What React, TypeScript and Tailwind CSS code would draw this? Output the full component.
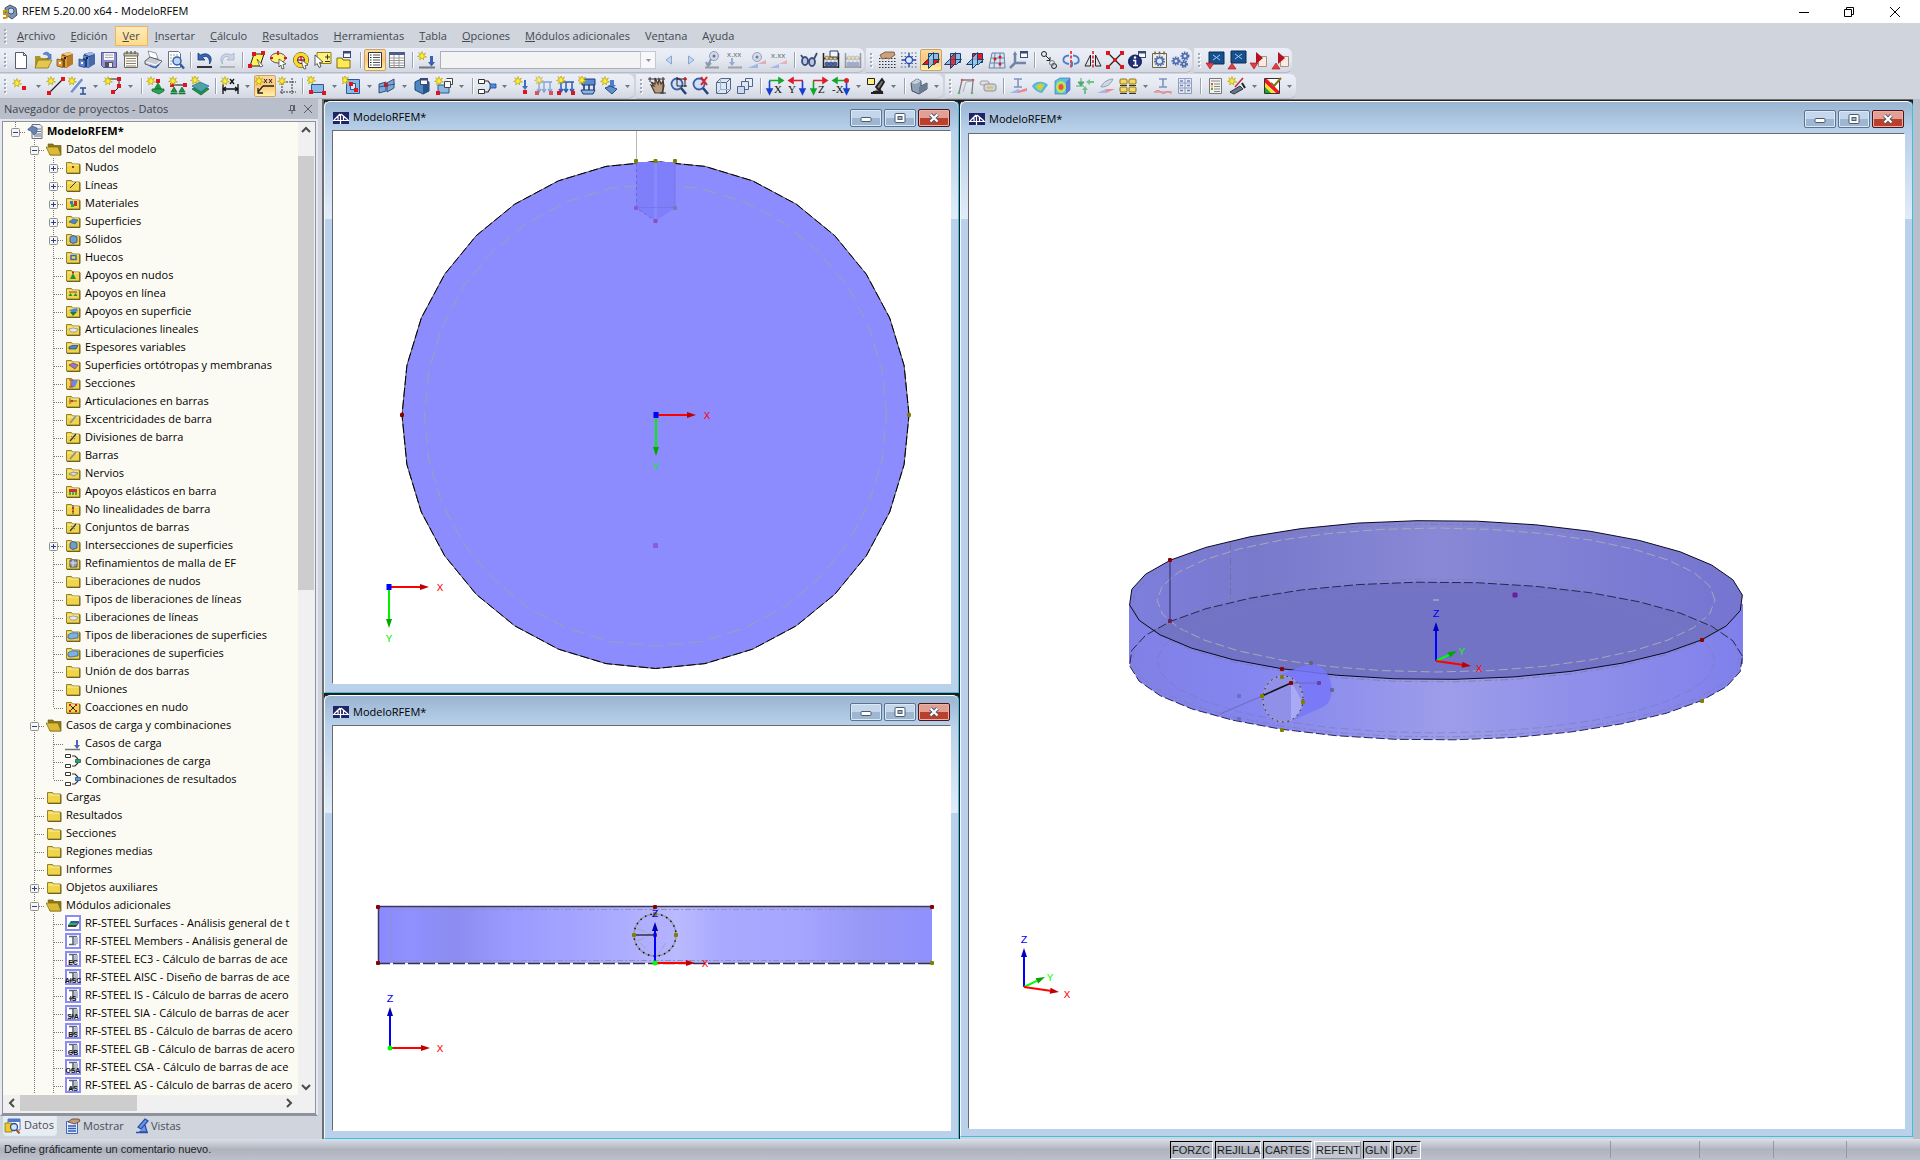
import type { ReactNode } from 'react';
import { clsx } from 'clsx';

// ---------- icon primitives (20x20 grid) ----------

const Star = ({ x = 5, y = 5 }: { x?: number; y?: number }) => (
  <path
    transform={`translate(${x} ${y})`}
    d="M0-4.500L1-1.500 3.500-3 1.800-.4 4.500 1 1.500 1.200 1.500 4 0 2-2.500 4-1.600 1-4.500 .5-1.800-.7-3.200-3.300-1-1.700Z"
    fill="#ffed2e"
    stroke="#b7a51a"
    strokeWidth=".7"
  />
);

const Node = ({ x, y, c = '#e0141e' }: { x: number; y: number; c?: string }) => (
  <rect x={x - 2} y={y - 2} width="4" height="4" fill={c} />
);

const Cabinet = ({ c, d, l }: { c: string; d: string; l: string }) => (
  <>
    <path d="M7 4l7-2 4 2v10l-7 4-7-2z" fill={d} />
    <path d="M7 4l7-2 4 2-6 2z" fill={l} />
    <path d="M6 5l6 2v10l-2 1V9L6 8z" fill={c} />
    <path d="M2 9l6 1.500v7L2 16z" fill={c} stroke={d} strokeWidth=".8" />
    <path d="M12 7l6-3v10l-6 4z" fill={c} fillOpacity=".6" />
    <rect x="4" y="12" width="2" height="2" fill="#fff" />
    <rect x="9" y="7" width="2" height="2" fill="#222" />
  </>
);

const LoadArrow = ({ c = '#3c5fb4' }: { c?: string }) => (
  <>
    <path d="M2 17.500h16" stroke="#777" strokeWidth="2" />
    <path d="M13 6v6h-2l3.500 4.500L18 12h-2V6z" fill={c} />
  </>
);

const Planes = ({ front, side, top }: { front?: boolean; side?: boolean; top?: boolean }) => (
  <>
    <path d="M7.500 3.500h10v9h-10z" fill={top ? '#f01822' : '#8dbde6'} stroke="#17406e" />
    <path d="M1.500 14.500l5-5h12l-5 5z" fill={front ? '#e01a24' : '#8dbde6'} stroke="#17406e" />
    <path d="M7.500 7.500l5-5v11l-5 5z" fill={side ? '#e01a24' : '#9ccaf0'} stroke="#17406e" fillOpacity=".8" />
  </>
);

const AxisView = ({ h, v, label, flip }: { h: string; v: string; label: string; flip?: boolean }) => (
  <>
    <g transform={flip ? 'translate(20 0) scale(-1 1)' : undefined}>
      <path d="M4 4.500h10M14 2l4 2.500L14 7z" stroke={h} strokeWidth="1.600" fill={h} />
      <path d="M4.500 5v9M2 13l2.500 5L7 13z" stroke={v} strokeWidth="1.600" fill={v} />
    </g>
    <text x={flip ? 1 : 9} y="17" fontSize="11" fontFamily="Liberation Serif, serif" fill="#111">
      {label}
    </text>
  </>
);

const Beads = ({ faded }: { faded?: boolean }) => (
  <g opacity={faded ? 0.4 : 1}>
    <path d="M2.500 3v15M17.500 3v15M2 8.500h16M2 17h16" stroke="#222" strokeWidth="1.500" />
    {[6, 10, 14].map((x) => (
      <g key={x}>
        <circle cx={x} cy="8" r="2" fill="#d9c98a" stroke="#6b5c20" strokeWidth=".6" />
        <circle cx={x} cy="14" r="2" fill="#4664b8" stroke="#1d2c60" strokeWidth=".6" />
      </g>
    ))}
    {!faded && <path d="M9 1h8v6H9z" fill="#f4f4fb" stroke="#34405e" />}
  </g>
);

const MiniWindow = ({ x = 11, y = 1 }: { x?: number; y?: number }) => (
  <>
    <rect x={x + 0.5} y={y + 0.5} width="7" height="6" fill="#f8f9ff" stroke="#3c4a70" />
    <path d={`M${x} ${y + 1.5}h8`} stroke="#3c4a70" strokeWidth="2" />
  </>
);

const Gear = ({ x, y, r, c = '#4d6cb0' }: { x: number; y: number; r: number; c?: string }) => (
  <>
    <circle cx={x} cy={y} r={r} fill="none" stroke={c} strokeWidth="2" strokeDasharray="1.500 1" />
    <circle cx={x} cy={y} r={r - 1.2} fill="#dfe7f7" stroke={c} strokeWidth="1.600" />
  </>
);

const Support = ({ x, y }: { x: number; y: number }) => (
  <>
    <path d={`M${x} ${y}l3 5h-6z`} fill="#1d9444" stroke="#0b5c25" strokeWidth=".6" />
    <path d={`M${x - 3.5} ${y + 6.5}h7`} stroke="#0b7a30" strokeWidth="1.500" />
  </>
);

const icons: Record<string, ReactNode> = {
  newDoc: <path d="M4.500 2.500h8l3 3v13h-11zM12.500 2.500v3h3" fill="#fff" stroke="#555c6e" />,
  open: (
    <>
      <path d="M2 6h5l1 2h8v10H2z" fill="#b09526" />
      <path d="M10 4c3-3 6-2 7 1l1-1v5h-4l1.500-2c-1-3-3-2-5.500-3z" fill="#5b8ad0" stroke="#315a9a" strokeWidth=".6" />
      <path d="M5 10h14l-4 8H2z" fill="#e2c850" stroke="#8c741a" strokeWidth=".8" />
    </>
  ),
  cabOrange: <Cabinet c="#e09a35" d="#7a4d12" l="#f3c684" />,
  cabBlue: <Cabinet c="#5d86cf" d="#23407e" l="#9db9ea" />,
  save: (
    <>
      <path d="M2.500 2.500h15v15h-13l-2-2z" fill="#8f8fd0" stroke="#55559a" />
      <path d="M5 3h10v7H5z" fill="#f5f5fa" />
      <path d="M6 5h8M6 7.500h8" stroke="#aaa" />
      <path d="M6 12h8v5H6z" fill="#555" />
      <path d="M10 13h3v4h-3z" fill="#eee" />
    </>
  ),
  clip: (
    <>
      <path d="M3.500 3.500h13v14h-13z" fill="#fdfdf5" stroke="#6b6455" />
      <path d="M3 3h14v3H3z" fill="#c9c1ae" stroke="#6b6455" />
      <path d="M6 1v3M10 1v3M14 1v3" stroke="#6b6455" strokeWidth="1.500" />
      <path d="M5 8.500h10M5 11h10M5 13.500h10M5 16h10" stroke="#87806c" />
    </>
  ),
  print: (
    <>
      <path d="M5 1l8 2 2 6-8-1z" fill="#fff" stroke="#7a8090" strokeWidth=".8" />
      <path d="M2 11l5-4 12 4-6 7L2 14z" fill="#c9ccd6" stroke="#5b606e" />
      <path d="M3 12l10 3 5-4" stroke="#fff" fill="none" />
      <path d="M7 16l5 1.500 4-3" stroke="#3e63b0" fill="none" strokeWidth="1.500" />
    </>
  ),
  preview: (
    <>
      <path d="M3.500 1.500h10l2 2v14h-12z" fill="#fff" stroke="#6d7280" />
      <path d="M5 5h8M5 8h4M5 11h3M5 14h3" stroke="#9aa0ae" strokeDasharray="2 1" />
      <circle cx="12" cy="11" r="4" fill="#bdd4f3" stroke="#2f5da8" strokeWidth="1.500" />
      <path d="M15 14l4 4.500" stroke="#2f5da8" strokeWidth="2.500" />
    </>
  ),
  undo: (
    <>
      <path d="M3 3v7h7L7.500 7.500C11 5 15 7 14.500 14 19 8 14 1 5.500 5z" fill="#3566b8" stroke="#1c3a75" strokeWidth=".8" />
      <path d="M2 17h15" stroke="#333" strokeWidth="2" />
    </>
  ),
  redo: (
    <g opacity=".6">
      <path d="M17 3v7h-7l2.500-2.500C9 5 5 7 5.500 14 1 8 6 1 14.500 5z" fill="#b9c9e2" stroke="#7d8ba5" strokeWidth=".8" />
      <path d="M3 17h15" stroke="#999" strokeWidth="2" />
    </g>
  ),
  selPoly: (
    <>
      <path d="M7 4h10l-4 12H3z" fill="#fff35a" stroke="#222" />
      <Node x={7} y={4} />
      <Node x={16} y={3} />
      <Node x={3} y={16} />
      <path d="M10 9l6 7-3 1z" fill="#fff" stroke="#222" strokeWidth=".6" />
    </>
  ),
  selEllipse: (
    <>
      <ellipse cx="9" cy="8" rx="7.500" ry="5" fill="#fff07a" stroke="#555" />
      <path d="M9 1v4M1 8h3M15 8h3" stroke="#e0141e" strokeWidth="1.800" />
      <path d="M10 9l7 5-3 .5 1 4-2 .5-1-4-2 2z" fill="#fff" stroke="#333" strokeWidth=".7" />
    </>
  ),
  selRing: (
    <>
      <circle cx="10" cy="10" r="7.500" fill="#fff" stroke="#7a6a00" />
      <circle cx="10" cy="10" r="5.500" fill="none" stroke="#ffd82a" strokeWidth="3.500" />
      <circle cx="10" cy="10" r="3.500" fill="none" stroke="#222" />
      <path d="M10 6v5M7 10h6" stroke="#e0141e" strokeWidth="1.500" />
      <path d="M11 10l6 5-3 .5 1 3-2 .5-2-5z" fill="#fff" stroke="#333" strokeWidth=".7" />
    </>
  ),
  selPlus: (
    <>
      <path d="M4 2.500h14v11H4z" fill="#fff27a" stroke="#8a7f20" />
      <path d="M12 7h5M14.500 4.500v5M12 11.500h5" stroke="#333" />
      <path d="M2 5l8 7-3.500.5 1.500 4-2 1-2-4-2 2z" fill="#fff" stroke="#333" strokeWidth=".8" />
    </>
  ),
  selWin: (
    <>
      <path d="M2 8h5l1 2h7v8H2z" fill="#ffea52" stroke="#7a6d12" />
      <MiniWindow x={8} y={1} />
    </>
  ),
  listOn: (
    <>
      <path d="M3.500 2.500h13v15h-13z" fill="#fff" stroke="#333" />
      <path d="M8 5h7M8 7.500h7M8 10h7M8 12.500h7M8 15h7" stroke="#555" />
      <path d="M5 5h1.500M5 7.500h1.500M5 10h1.500M5 12.500h1.500M5 15h1.500" stroke="#222" />
    </>
  ),
  table: (
    <>
      <path d="M2.500 3.500h15v14h-15z" fill="#fff" stroke="#777" />
      <path d="M2 2h16v3H2z" fill="#4c5f8a" />
      <path d="M3 8h14M3 10.500h14M3 13h14M3 15.500h14M7 5v12M12 5v12" stroke="#999" />
    </>
  ),
  loadCase: (
    <>
      <LoadArrow />
      <Star x={5} y={6} />
    </>
  ),
  prev: <path d="M12.500 6v8L7 10z" fill="#c8d8f0" stroke="#8aa4d4" />,
  next: <path d="M7.500 6v8l5.500-4z" fill="#c8d8f0" stroke="#8aa4d4" />,
  resView: (
    <g opacity=".65">
      <path d="M2 17.500h14" stroke="#777" strokeWidth="2" />
      <circle cx="11" cy="6" r="4.500" fill="#c5d2e8" stroke="#5f7398" />
      <circle cx="11" cy="6" r="1.500" fill="#334" />
      <path d="M8 9l-3 6M3 12l2 4 3-3" stroke="#5f7398" strokeWidth="2" fill="none" />
    </g>
  ),
  valLoad: (
    <g opacity=".7">
      <text x="2" y="7" fontSize="8" fontFamily="Liberation Sans" fill="#333">x.xx</text>
      <path d="M3 17.500h14" stroke="#8a8a8a" strokeWidth="2" />
      <path d="M6 8h2v4h2l-3 4-3-4h2z" fill="#7b93c4" />
    </g>
  ),
  eyeRes: (
    <g opacity=".6">
      <circle cx="10" cy="7" r="4.500" fill="#c5d2e8" stroke="#5f7398" />
      <circle cx="10" cy="7" r="1.500" fill="#334" />
      <path d="M10 14l9-4v4z" fill="#e08a96" />
      <path d="M1 18l9-4h1v4z" fill="#7f9ae0" />
    </g>
  ),
  valRes: (
    <g opacity=".7">
      <text x="2" y="8" fontSize="8" fontFamily="Liberation Sans" fill="#333">x.xx</text>
      <path d="M10 14l8-4v4z" fill="#ef9aa4" />
      <path d="M1 18l9-4v4z" fill="#8ea6ee" />
    </g>
  ),
  glasses: (
    <>
      <ellipse cx="6" cy="11" rx="3" ry="4" fill="#b9c7e2" stroke="#3a4c7a" strokeWidth="1.800" />
      <ellipse cx="13" cy="12" rx="3" ry="4" fill="#b9c7e2" stroke="#3a4c7a" strokeWidth="1.800" />
      <path d="M4 8L2 5M15 9l3-6M9 11h1" stroke="#3a4c7a" strokeWidth="1.800" />
    </>
  ),
  beads: <Beads />,
  beadsOff: <Beads faded />,
  gridHand: (
    <>
      <path d="M2 8.500h17M2 11.500h17M2 14.500h17M2 17.500h17" stroke="#333" strokeDasharray="1.500 1.500" />
      <path d="M3 5l5-3h9l1 3-6 4-3-1-4 1z" fill="#c9a27d" stroke="#6d4c30" strokeWidth=".8" />
    </>
  ),
  snap: (
    <>
      <path d="M2 3h17M2 6.500h17M2 10h17M2 13.500h17M2 17h17" stroke="#666" strokeDasharray="1.500 2" />
      <path d="M10 3v14M3 10h14" stroke="#1c4bb8" strokeWidth="1.300" />
      <circle cx="10" cy="10" r="3.500" fill="#dfe8fb" stroke="#1c4bb8" strokeWidth="1.300" />
    </>
  ),
  planeXY: <Planes front />,
  planeYZ: <Planes side />,
  planeXZ: <Planes top />,
  gridSurf: (
    <>
      <path d="M5 3h12l1 15H2zM8 3l-1 15M13 3v15M4 8h13M3 13h14" fill="#d9e4f2" stroke="#6585a8" />
      <circle cx="13" cy="7" r="1.500" fill="#e0141e" />
      <circle cx="8" cy="9" r="1.500" fill="#e0141e" />
      <circle cx="13" cy="14" r="1.500" fill="#e0141e" />
    </>
  ),
  axesWin: (
    <>
      <path d="M6 3v10h11M6 13l-5 5" stroke="#7284a8" strokeWidth="2.500" fill="none" />
      <path d="M4 5l2-4 2 4z" fill="#7284a8" />
      <MiniWindow />
    </>
  ),
  copyObj: (
    <>
      <circle cx="5" cy="4" r="2.500" fill="none" stroke="#222" />
      <circle cx="15" cy="16" r="2.500" fill="none" stroke="#222" />
      <circle cx="13" cy="13" r="2.500" fill="none" stroke="#777" />
      <path d="M7 6l4 4M11 7v3.500H7.500" stroke="#222" fill="none" />
    </>
  ),
  rotateObj: (
    <>
      <path d="M10 1v18" stroke="#e0141e" strokeWidth="1.500" strokeDasharray="3 1.500" />
      <path d="M8 14C0 13 1 6 8 5.500M12 5.500c7 .5 8 7.500 1 8.500" fill="none" stroke="#4f7ec9" strokeWidth="1.800" />
      <path d="M12 11v6l-3-3z" fill="#4f7ec9" />
    </>
  ),
  mirror: (
    <>
      <path d="M10 1v18" stroke="#e0141e" strokeWidth="1.500" strokeDasharray="3 1.500" />
      <path d="M7.500 5v11H2zM12.500 5v11H18z" fill="none" stroke="#222" />
    </>
  ),
  cross: (
    <>
      <path d="M4 4l12 12M16 4L4 16" stroke="#222" strokeWidth="1.300" />
      <Node x={3} y={3} />
      <Node x={17} y={3} />
      <Node x={3} y={17} />
      <Node x={17} y={17} />
      <circle cx="10" cy="10" r="2" fill="#e0141e" />
    </>
  ),
  info: (
    <>
      <MiniWindow x={11} y={1} />
      <circle cx="8" cy="11.500" r="6.500" fill="#1f2f78" stroke="#0f1848" />
      <path d="M6 10.500h2.500v5M6 15.500h5" stroke="#fff" strokeWidth="1.600" fill="none" />
      <circle cx="8" cy="7.500" r="1.200" fill="#fff" />
    </>
  ),
  gearDoc: (
    <>
      <path d="M3.500 3.500h14v14h-14z" fill="#f1eedd" stroke="#6b6455" />
      <path d="M6 1.500v3M10.500 1.500v3M15 1.500v3" stroke="#6b6455" strokeWidth="1.500" />
      <Gear x={10.5} y={11} r={4.5} />
    </>
  ),
  gears: (
    <>
      <Gear x={5} y={11} r={3.5} />
      <Gear x={14} y={6} r={3.5} />
      <Gear x={13} y={14} r={3} />
    </>
  ),
  scrUp: (
    <>
      <path d="M4 2h15v12H4z" fill="#17508e" stroke="#0b2c55" />
      <path d="M8 5l7 5M15 5l-7 5" stroke="#9fd0f0" />
      <path d="M1 13h8l-4 6z" fill="#ea3a44" stroke="#97151d" strokeWidth=".6" />
    </>
  ),
  scrDown: (
    <>
      <path d="M4 1h15v12H4z" fill="#17508e" stroke="#0b2c55" />
      <path d="M8 4l7 5M15 4l-7 5" stroke="#9fd0f0" />
      <path d="M1 19h8l-4-6z" fill="#ea3a44" stroke="#97151d" strokeWidth=".6" />
    </>
  ),
  pdfUp: (
    <>
      <path d="M9.500 6.500h8v10h-8z" fill="#fbe9e2" stroke="#a79088" />
      <path d="M7 2l7 6-7 6z" fill="#b31320" />
      <path d="M1 13h8l-4 6z" fill="#ea3a44" stroke="#97151d" strokeWidth=".6" />
    </>
  ),
  pdfDown: (
    <>
      <path d="M9.500 6.500h8v10h-8z" fill="#fbe9e2" stroke="#a79088" />
      <path d="M7 2l7 6-7 6z" fill="#b31320" />
      <path d="M1 19h8l-4-6z" fill="#ea3a44" stroke="#97151d" strokeWidth=".6" />
    </>
  ),

  // second row
  node: (
    <>
      <Star x={6} y={7} />
      <Node x={13} y={12} />
    </>
  ),
  line: (
    <>
      <path d="M3 17L17 3" stroke="#222" strokeWidth="1.300" />
      <Star x={5} y={5} />
      <Node x={17} y={3} />
      <Node x={3} y={17} />
    </>
  ),
  member: (
    <>
      <path d="M3 16L14 3" stroke="#6d92cf" strokeWidth="3" />
      <path d="M2 15L13 2" stroke="#fff" />
      <Star x={4} y={5} />
      <path d="M12 12h6M15 12v6M12 18h6" stroke="#2c4f9a" strokeWidth="1.500" />
    </>
  ),
  polyline: (
    <>
      <path d="M5 3h11v8l-6 6" stroke="#222" fill="none" />
      <Star x={5} y={5} />
      <Node x={16} y={3} />
      <Node x={16} y={10} />
      <Node x={10} y={16} />
    </>
  ),
  supNode: (
    <>
      <path d="M12 6l4 7H8z" fill="#1d9444" />
      <path d="M6 13h12v2l-5 3-7-3z" fill="#2ba552" stroke="#0b5c25" strokeWidth=".7" />
      <Star x={5} y={5} />
      <Node x={12} y={5} />
    </>
  ),
  supLine: (
    <>
      <path d="M3 9h14" stroke="#555" strokeWidth="1.500" />
      <Node x={4} y={9} />
      <Node x={17} y={9} />
      <Star x={5} y={5} />
      <Support x={6} y={11} />
      <Support x={14} y={11} />
    </>
  ),
  supSurf: (
    <>
      <path d="M2 13l8-4 9 4-8 6z" fill="#1d9444" stroke="#0b5c25" strokeWidth=".7" />
      <path d="M2 10l8-4 9 4-8 6z" fill="#4fa3a4" stroke="#2b5b95" strokeWidth=".7" />
      <Star x={5} y={4} />
    </>
  ),
  dim: (
    <>
      <path d="M3 8v10M18 8v10M3 13h15M6 11l-3 2 3 2M15 11l3 2-3 2" stroke="#111" strokeWidth="1.300" fill="none" />
      <path d="M10 3l4 5M14 3l-4 5" stroke="#111" strokeWidth="1.300" />
      <Star x={5} y={5} />
    </>
  ),
  comment: (
    <>
      <path d="M8 10h11M8 10l-5 6M3 12v5h5" stroke="#222" strokeWidth="1.300" fill="none" />
      <path d="M9 3l3 4M12 3L9 7M14 3l3 4M17 3l-3 4" stroke="#222" />
      <Star x={4} y={5} />
    </>
  ),
  guide: (
    <>
      <path d="M5 4v14M15 2v16M3 6h16M3 16h16" stroke="#333" strokeDasharray="2 1" />
      <Star x={5} y={5} />
    </>
  ),
  surface: (
    <>
      <path d="M4.500 8.500h12v8h-12z" fill="#8cb8e6" stroke="#2a5a93" />
      <Star x={4} y={4} />
      <Node x={17} y={17} />
      <Node x={4} y={16} />
    </>
  ),
  opening: (
    <>
      <path d="M4.500 3.500h13v14h-13z" fill="#8cb8e6" stroke="#2a5a93" />
      <path d="M8.500 7.500h5v6h-5z" fill="#dfe8f4" stroke="#2a5a93" />
      <Star x={3} y={4} />
      <Node x={9} y={8} />
      <Node x={14} y={14} />
    </>
  ),
  intersect: (
    <>
      <path d="M2 8l7-2v9l-7 2zM10 7l7-4v9l-7 4z" fill="#7fa9d4" stroke="#2d5180" />
      <Node x={9} y={9} />
      <path d="M2 11l16-3" stroke="#2d5180" />
    </>
  ),
  solid: (
    <>
      <path d="M3 6l6-3 8 3v9l-6 3-8-4z" fill="#4f86c4" stroke="#1d426f" />
      <path d="M11 9v9l6-3V6z" fill="#29558c" />
      <MiniWindow x={8} y={2} />
    </>
  ),
  solidNew: (
    <>
      <path d="M4 9h11v8H4z" fill="#8cb8e6" stroke="#2a5a93" />
      <path d="M10.500 5.500h6v6h-6zM12.500 2.500h6v6h-2" fill="#fff" stroke="#444" />
      <Star x={5} y={5} />
      <Node x={4} y={17} />
    </>
  ),
  combo: (
    <>
      <path d="M1.500 3.500h6v4h-6zM1.500 13.500h6v4h-6z" fill="#fff" stroke="#333" />
      <path d="M8 5h3l3 4M8 16h3l3-5" stroke="#333" fill="none" strokeWidth="1.200" />
      <path d="M13 8h6v4h-6z" fill="#4f8be0" stroke="#1f4a94" strokeWidth=".8" />
    </>
  ),
  ldNode: (
    <>
      <path d="M12 4v6h-2l3 4 3-4h-2V4z" fill="#3c6fc4" />
      <Star x={6} y={5} />
      <Node x={13} y={16} />
    </>
  ),
  ldLine: (
    <g opacity=".7">
      <path d="M3 6h15M5 6v9M10 6v9M16 6v9M3 13l2 3 2-3M8 13l2 3 2-3M14 13l2 3 2-3" stroke="#5b82cf" fill="none" strokeWidth="1.300" />
      <Star x={5} y={4} />
      <Node x={3} y={17} />
      <Node x={17} y={17} />
    </g>
  ),
  ldMember: (
    <>
      <path d="M3 6h15M5 6v9M10 6v9M16 6v9M3 13l2 3 2-3M8 13l2 3 2-3M14 13l2 3 2-3" stroke="#2f5db8" fill="none" strokeWidth="1.500" />
      <Star x={5} y={4} />
      <Node x={3} y={17} />
      <Node x={17} y={17} />
    </>
  ),
  ldSurf: (
    <>
      <path d="M4 3h13v6H4z" fill="#5a8bd4" stroke="#1d3a75" />
      <path d="M6 9v5M11 9v5M16 9v5" stroke="#1d3a75" strokeWidth="1.600" />
      <path d="M3 14h14l-2 4H5z" fill="#8ab5e6" stroke="#1d3a75" />
      <Star x={4} y={4} />
    </>
  ),
  ldSolid: (
    <>
      <path d="M10 4v5h-2l4 4 4-4h-2V4z" fill="#4f7dd0" />
      <path d="M5 12l5-2 7 3-5 5z" fill="#5d90c9" stroke="#254d80" />
      <Star x={5} y={5} />
    </>
  ),
  pan: (
    <>
      <path d="M4 6l3 4-3-1 4 8h7l2-7-1-5-2 3-2-5-1 5-3-6v6z" fill="#b79c80" stroke="#4a3828" strokeWidth="1.200" />
      <path d="M1 3h17M16 1v17M3 1v5M13 17h6" stroke="#333" />
    </>
  ),
  zoomWin: (
    <>
      <circle cx="8" cy="8" r="5.500" fill="#cfe0f8" stroke="#3a5fa8" strokeWidth="1.800" />
      <path d="M12 12l5 6" stroke="#26417c" strokeWidth="2.500" />
      <path d="M8 3h10M16 1v10M8 1v9h10" stroke="#222" fill="none" />
      <circle cx="16" cy="3" r="1.500" fill="#e0141e" />
    </>
  ),
  zoomAll: (
    <>
      <circle cx="8" cy="8" r="5.500" fill="#cfe0f8" stroke="#3a5fa8" strokeWidth="1.800" />
      <path d="M12 12l5 6" stroke="#26417c" strokeWidth="2.500" />
      <path d="M10 1l6 8M16 1l-6 8" stroke="#dd1f28" strokeWidth="2" />
    </>
  ),
  box: (
    <>
      <path d="M3.500 6.500h10v11h-10zM3.500 6.500l4-4h10l-4 4M17.500 2.500v11l-4 4" fill="#dce6f5" stroke="#52658c" />
      <path d="M7.500 2.500v11h10M7.500 13.500l-4 4" fill="none" stroke="#9fb0d0" />
    </>
  ),
  boxes: (
    <>
      <path d="M10.500 2.500h7v8h-7z" fill="#e6edf8" stroke="#52658c" />
      <path d="M6.500 5.500h7v8h-7z" fill="#dce6f5" stroke="#52658c" />
      <path d="M2.500 10.500h7v7h-7z" fill="#cbd9ef" stroke="#52658c" />
    </>
  ),
  viewX: <AxisView h="#16a52e" v="#1b3fd0" label="X" />,
  viewY: <AxisView h="#dd1f28" v="#1b3fd0" label="Y" flip />,
  viewZ: <AxisView h="#dd1f28" v="#16a52e" label="Z" />,
  viewMX: (
    <>
      <path d="M5 4.500h11M6 2L2 4.500 6 7z" stroke="#16a52e" strokeWidth="1.600" fill="#16a52e" />
      <path d="M15.500 5v9M13 13l2.500 5 2.500-5z" stroke="#1b3fd0" strokeWidth="1.600" fill="#1b3fd0" />
      <circle cx="15.500" cy="4.500" r="2.500" fill="#dd1f28" />
      <text x="1" y="17" fontSize="11" fontFamily="Liberation Serif, serif" fill="#111">-X</text>
    </>
  ),
  microscope: (
    <>
      <path d="M16 3l-6 8 3 3 5-8zM7 16h10M13 12l3 5H5" stroke="#222" strokeWidth="1.800" fill="#777" />
      <path d="M1.500 2.500h7v6h-7z" fill="#fff27a" stroke="#222" />
    </>
  ),
  solidGrey: (
    <>
      <path d="M2 7l6-4 4 2v5l6-3v6l-8 5-7-3z" fill="#91a0b2" stroke="#3f4f63" />
      <path d="M10 11v7l8-5V7z" fill="#6b7b90" />
      <path d="M2 7l6-4 4 2-5 3z" fill="#c5d0dd" />
    </>
  ),
  frame: (
    <g opacity=".7">
      <path d="M3 17L6 4h11l-1 13" fill="none" stroke="#555" strokeWidth="1.300" />
      <path d="M7 16L10 6l8-1" fill="none" stroke="#999" />
      <circle cx="6" cy="4" r="1.300" fill="#e0141e" />
      <circle cx="17" cy="4" r="1.300" fill="#e0141e" />
      <circle cx="3" cy="17" r="1.300" fill="#2fa34c" />
      <circle cx="16" cy="17" r="1.300" fill="#2fa34c" />
    </g>
  ),
  tag: (
    <g opacity=".75">
      <rect x="2" y="5" width="9" height="4" rx="2" fill="#ddd" stroke="#888" />
      <rect x="6" y="8" width="12" height="7" rx="2" fill="#ccc" stroke="#777" />
      <path d="M9 11.500h6" stroke="#e0b030" strokeWidth="2" />
    </g>
  ),
  beamRes: (
    <g opacity=".75">
      <path d="M6 3h8M10 3v8M6 11h8" stroke="#5b79b0" strokeWidth="1.600" />
      <path d="M2 17l8-4h1v4z" fill="#8ea6ee" />
      <path d="M10 17v-2l9-3v3z" fill="#ef6a74" />
    </g>
  ),
  surfRes: (
    <>
      <path d="M2 10c3-5 11-6 16-1l-6 8c-3 0-8-3-10-7z" fill="#5ab0e8" />
      <path d="M5 10c3-3 7-4 10-1l-4 6c-2 0-5-2-6-5z" fill="#8ee05a" />
      <path d="M7 10c2-2 4-2 6 0l-2 3c-2 0-3-1-4-3z" fill="#f0c03a" />
    </>
  ),
  solidRes: (
    <>
      <path d="M3 5l5-3h10v12l-4 4H3z" fill="#5ac0e8" stroke="#3d7f9c" strokeWidth=".7" />
      <ellipse cx="9" cy="11" rx="5" ry="6" fill="#b6e65a" />
      <ellipse cx="9" cy="11" rx="2.500" ry="3" fill="#f0503a" />
      <path d="M14 6l4-4v12l-4 4z" fill="#5c78e0" />
    </>
  ),
  supRes: (
    <g opacity=".75">
      <path d="M7 2v4M4 6h6L7 10zM2 10h8" fill="#1d9444" stroke="#1d9444" />
      <path d="M12 6l4-3v2h4v2h-4v2z" fill="#4db56a" />
      <path d="M10 18h2v-4h2l-3-4-3 4h2z" fill="#4db56a" />
    </g>
  ),
  sectRes: (
    <g opacity=".7">
      <path d="M5 11c2-5 8-8 12-8-2 5-6 8-12 8z" fill="#c7d2e2" stroke="#6b7c96" />
      <path d="M1 17l9-4v4z" fill="#8ea6ee" />
      <path d="M10 13h9l-9 4z" fill="#ef6a74" />
    </g>
  ),
  panels: (
    <>
      {[
        [2, 3],
        [11, 3],
        [2, 11],
        [11, 11],
      ].map(([x, y]) => (
        <rect key={`${x}-${y}`} x={x} y={y} width="7" height="5" rx="1" fill="#f5da62" stroke="#8c741a" />
      ))}
      <path d="M2 9.500h7M11 9.500h7M2 17.500h7M11 17.500h7" stroke="#333" />
    </>
  ),
  beamCurve: (
    <g opacity=".75">
      <path d="M6 3h8M10 3v8M6 11h8" stroke="#5b79b0" strokeWidth="1.600" />
      <path d="M2 16c5-5 6 4 10 1s5-1 6 1M1 16h18" fill="none" stroke="#e05560" />
    </g>
  ),
  multiTable: (
    <g opacity=".75">
      <path d="M3.500 2.500h13v15h-13zM10 2v15M3 7h14M3 12h14" fill="#e5eaf5" stroke="#7486b0" />
      <path d="M5 5h3M12 5h3M5 9.500h3M12 9.500h3M5 14.500h3M12 14.500h3" stroke="#4e63a0" strokeWidth="1.500" />
    </g>
  ),
  report: (
    <>
      <path d="M4.500 2.500h12v15h-12z" fill="#f2f2ee" stroke="#777" />
      <path d="M6 5h9M9 8h6M9 10.500h6M9 13h6M9 15.500h6" stroke="#888" />
      <path d="M6 8h2" stroke="#e05050" strokeWidth="2" />
      <path d="M6 10.500h2" stroke="#e0c030" strokeWidth="2" />
      <path d="M6 13h2" stroke="#40b060" strokeWidth="2" />
    </>
  ),
  wand: (
    <>
      <path d="M3 16l10-6 3 3-9 5z" fill="#6a7688" stroke="#2c3442" />
      <path d="M8 11l8-9" stroke="#c02a30" strokeWidth="1.500" />
      <path d="M15 7l3 5" stroke="#222" strokeWidth="2" />
      <Star x={5} y={5} />
    </>
  ),
  colorScale: (
    <>
      <path d="M2.500 2.500h15v15h-15z" fill="#fff" stroke="#333" />
      <path d="M3 3h2l12 12v2h-3L3 7z" fill="#f01822" />
      <path d="M3 7l10 10H9l-6-6z" fill="#ffe11a" />
      <path d="M3 11l6 6H3z" fill="#1ba336" />
      <path d="M9 7l3 3 7-8" stroke="#8c6d1a" strokeWidth="2" fill="none" />
    </>
  ),
};

function Icon({ name }: { name: string }) {
  return (
    <svg viewBox="0 0 20 20" className="size-5 shrink-0">
      {icons[name]}
    </svg>
  );
}

// ---------- toolbars ----------
// '|' = separator, 'v' = dropdown arrow, '*' prefix = pressed button, 'select' = load case list

const toolbarRows: string[][][] = [
  [
    [
      'newDoc', 'open', 'cabOrange', 'cabBlue', 'save', 'clip', 'print', 'preview', '|', 'undo', 'redo', '|',
      'selPoly', 'selEllipse', 'selRing', 'selPlus', 'selWin', '|', '*listOn', 'table', '|', 'loadCase', 'select',
      'prev', 'next', 'resView', 'valLoad', 'eyeRes', 'valRes', '|', 'glasses', 'beads', 'beadsOff',
    ],
    [
      'gridHand', 'snap', '*planeXY', 'planeYZ', 'planeXZ', 'gridSurf', 'axesWin', '|', 'copyObj', 'rotateObj',
      'mirror', 'cross', 'info', 'gearDoc', 'gears',
    ],
    ['scrUp', 'scrDown', 'pdfUp', 'pdfDown'],
  ],
  [
    [
      'node', 'v', 'line', 'member', 'v', 'polyline', 'v', '|', 'supNode', 'supLine', 'supSurf', '|', 'dim', 'v',
      '*comment', 'guide', '|', 'surface', 'v', 'opening', 'v', 'intersect', 'v', 'solid', 'solidNew', 'v', '|',
      'combo', 'v', 'ldNode', 'ldLine', 'ldMember', 'ldSurf', 'ldSolid', 'v',
    ],
    [
      'pan', 'zoomWin', 'zoomAll', 'box', 'boxes', '|', 'viewX', 'viewY', 'viewZ', 'viewMX', 'v', 'microscope', 'v',
      '|', 'solidGrey', 'v',
    ],
    [
      'frame', 'tag', '|', 'beamRes', 'surfRes', 'solidRes', 'supRes', 'sectRes', 'panels', 'v', 'beamCurve',
      'multiTable', '|', 'report', 'wand', 'v', 'colorScale', 'v',
    ],
  ],
];

function ToolbarItem({ item }: { item: string }) {
  if (item === '|') {
    return (
      <span className="flex w-2 justify-center">
        <span className="h-4 w-px bg-[#9aa0ad] shadow-[1px_0_0_#fff]" />
      </span>
    );
  }
  if (item === 'v') {
    return (
      <button aria-label="Más opciones" className="flex h-5 w-[13px] items-center justify-center">
        <svg viewBox="0 0 5 3" className="h-[3px] w-[5px]">
          <path d="M0 0h5L2.500 3z" fill="#70757f" />
        </svg>
      </button>
    );
  }
  if (item === 'select') {
    return (
      <span className="flex w-[220px] items-center px-0.5">
        <span className="relative flex w-full">
          <select
            aria-label="Caso de carga"
            disabled
            className="h-[18px] w-full appearance-none border border-[#aab0bb] bg-[#f3f3f4]"
          />
          <span className="pointer-events-none absolute inset-y-0 right-0 flex w-4 items-center justify-center border border-[#c5c9d1] bg-[#f8f8fa]">
            <svg viewBox="0 0 5 3" className="h-[3px] w-[5px]">
              <path d="M0 0h5L2.500 3z" fill="#8c919b" />
            </svg>
          </span>
        </span>
      </span>
    );
  }
  const pressed = item.startsWith('*');
  const name = pressed ? item.slice(1) : item;
  return (
    <button
      aria-label={name}
      className={clsx(
        'flex h-[22px] w-[22px] shrink-0 items-center justify-center',
        pressed && 'rounded-xs border border-[#c8a468] bg-linear-to-b from-[#fbd9a0] via-[#fdc777] to-[#fff0a8]'
      )}
    >
      <Icon name={name} />
    </button>
  );
}

function Grip() {
  return (
    <span className="flex w-2.5 shrink-0 flex-col items-center gap-0.5">
      {[0, 1, 2, 3].map((i) => (
        <span key={i} className="size-0.5 bg-[#a3a9b5] shadow-[1px_1px_0_#fff]" />
      ))}
    </span>
  );
}

function Toolbars() {
  return (
    <div className="flex flex-col gap-px bg-[#cfd4dd]">
      {toolbarRows.map((groups, row) => (
        <div key={row} className="flex gap-0.5">
          {groups.map((items, i) => (
            <div
              key={i}
              role="toolbar"
              className="flex h-[25px] items-center rounded-r-md border-b border-[#b6bbc6] bg-linear-to-b from-[#eceff7] via-[#e4e8f1] to-[#d3d7e1]"
            >
              <Grip />
              {items.map((item, n) => (
                <ToolbarItem key={n} item={item} />
              ))}
            </div>
          ))}
        </div>
      ))}
    </div>
  );
}

// ---------- title + menu ----------

const menus = [
  'Archivo', 'Edición', 'Ver', 'Insertar', 'Cálculo', 'Resultados', 'Herramientas', 'Tabla', 'Opciones',
  'Módulos adicionales', 'Ventana', 'Ayuda',
];

// position of the underlined access key
const accessKey: Record<string, number> = { Ventana: 2, Ayuda: 1 };

function TitleBar() {
  return (
    <header className="flex h-[23px] items-center justify-between bg-white pr-0.5">
      <div className="flex items-center gap-1 pl-0.5">
        <svg viewBox="0 0 16 16" className="size-4">
          <path d="M3 4l5-3 6 3 1 7-5 4-6-4z" fill="#7d93b0" stroke="#3d5370" />
          <circle cx="9" cy="7" r="3" fill="#c9d8ea" stroke="#3d5370" />
          <path d="M6 7H2v3h2c2 0 2 4-1 4H1" fill="none" stroke="#c49a15" strokeWidth="2" />
        </svg>
        <h1 className="text-[11px] text-black">RFEM 5.20.00 x64 - ModeloRFEM</h1>
      </div>
      <div className="flex text-black">
        <button aria-label="Minimizar" className="flex h-5 w-[45px] items-center justify-center">
          <svg viewBox="0 0 10 10" className="size-2.5">
            <path d="M0 5.500h10" stroke="currentColor" />
          </svg>
        </button>
        <button aria-label="Restaurar" className="flex h-5 w-[46px] items-center justify-center">
          <svg viewBox="0 0 10 10" className="size-2.5" fill="none" stroke="currentColor">
            <path d="M.5 2.500h7v7h-7zM2.500 2V.5h7v7H8" />
          </svg>
        </button>
        <button aria-label="Cerrar" className="flex h-5 w-[46px] items-center justify-center">
          <svg viewBox="0 0 10 10" className="size-2.5">
            <path d="M0 0l10 10M10 0L0 10" stroke="currentColor" />
          </svg>
        </button>
      </div>
    </header>
  );
}

function MenuBar() {
  return (
    <nav className="flex h-[25px] items-center bg-[#cfd4dd]">
      <Grip />
      {menus.map((menu) => {
        const k = accessKey[menu] ?? 0;
        return (
          <button
            key={menu}
            className={clsx(
              'h-5 border pr-[7px] pl-1.5 text-[11px] leading-4 text-[#44484f]',
              menu === 'Ver' ? 'border-[#f0b45c] bg-linear-to-b from-[#fdeaba] to-[#fddb8a]' : 'border-transparent'
            )}
          >
            {menu.slice(0, k)}
            <u>{menu[k]}</u>
            {menu.slice(k + 1)}
          </button>
        );
      })}
    </nav>
  );
}

// ---------- project navigator ----------

type TreeRow = { level: 0 | 1 | 2; label: string; icon: string; exp?: '+' | '-'; last?: boolean };

const folderMarks: Record<string, ReactNode> = {
  dot: <rect x="7" y="7" width="2" height="2" fill="#c21" />,
  line: <path d="M5 11l6-6" stroke="#333" />,
  material: (
    <>
      <path d="M5 6h3v3H5z" fill="#37c" />
      <path d="M9 6h3v5H9z" fill="#c33" />
      <path d="M6 9h3v3H6z" fill="#3a4" />
    </>
  ),
  surface: <path d="M4 9l4-3 5 1-3 4z" fill="#4f86c8" stroke="#2a4d80" strokeWidth=".6" />,
  solid: <path d="M5 6l3-1.500 4 1.500v5l-4 1.500L5 11z" fill="#6f9ccc" stroke="#2a4d80" strokeWidth=".8" />,
  hole: <path d="M6 6.500h5v4H6z" fill="#f0d95a" stroke="#3a6aa8" strokeWidth="1.500" />,
  support: (
    <>
      <path d="M8 6l3 6H5z" fill="#1d9444" />
      <rect x="7" y="4.500" width="2" height="2" fill="#d12" />
    </>
  ),
  lineSup: (
    <>
      <path d="M4 7h8" stroke="#a33" />
      <path d="M5.500 8l2 3h-4zM10.500 8l2 3h-4z" fill="#1d9444" />
    </>
  ),
  surfSup: (
    <>
      <path d="M4 7l8-2 1 3-5 2z" fill="#4f86c8" />
      <path d="M5 9l3 4 4-4z" fill="#1d7a3c" />
    </>
  ),
  hinge: <path d="M4 8l4-1 5 1-2 3H6z" fill="#e8e8ee" stroke="#8a8a96" strokeWidth=".7" />,
  thick: <path d="M4 8l3-1.500h6L11 10H4z" fill="#4f86c8" stroke="#233f68" strokeWidth=".7" />,
  ortho: <path d="M4 8l4-2 5 2-3 4z" fill="#7a86d0" stroke="#b3343c" strokeWidth=".8" />,
  section: (
    <>
      <path d="M7 5h6l-3 7H6z" fill="#6a8ae0" />
      <path d="M4 5h4M6 5v7M4 12h4" stroke="#b8303a" />
    </>
  ),
  hingeBar: (
    <>
      <path d="M5 5v6M5 8h7" stroke="#7a6a20" />
      <circle cx="7" cy="8" r="1.200" fill="#c33" />
    </>
  ),
  bar: <path d="M5 12l6-7" stroke="#8a8f98" strokeWidth="1.800" />,
  divBar: (
    <>
      <path d="M5 12l6-7" stroke="#333" strokeWidth="1.200" />
      <path d="M6 7l4 3" stroke="#777" />
    </>
  ),
  rib: <path d="M4 9l4-2 5 1-4 3z" fill="#d8d8d0" stroke="#777" strokeWidth=".7" />,
  elastic: (
    <>
      <path d="M4 6h8v3H4z" fill="#c33" />
      <path d="M5 9v3M8 9v3M11 9v3" stroke="#1d9444" strokeWidth="1.500" />
    </>
  ),
  nonlin: (
    <>
      <path d="M8 4v9" stroke="#444" />
      <path d="M8 6v2M8 10v1" stroke="#d22" strokeWidth="2" />
    </>
  ),
  cross: (
    <>
      <path d="M5 6l6 6M11 6l-6 6" stroke="#222" />
      <path d="M4 5h2v2H4zM10 5h2v2h-2zM4 11h2v2H4zM10 11h2v2h-2z" fill="#d12" />
    </>
  ),
  release: <path d="M3 8c3-3 7-2 10-2v5c-4 0-7 2-10 0z" fill="#7fb0e4" stroke="#2f6098" strokeWidth=".8" />,
  refine: (
    <>
      <path d="M5 5h7v7H5z" fill="#93a0b0" stroke="#4a5568" />
      <path d="M8 5v7M5 8h7" stroke="#dde" />
    </>
  ),
};

function TreeIcon({ name }: { name: string }) {
  if (name.startsWith('rf:')) {
    const tag = name.slice(3);
    return (
      <svg viewBox="0 0 16 16" className="size-4">
        <path d="M1 1h14v14H1z" fill="#fff" stroke="#8c8cf8" strokeWidth="2" />
        {tag === 'surf' ? (
          <>
            <path d="M3 10l3-4h8l-3 4z" fill="#29b35a" />
            <path d="M6 6h8l-2 2H5z" fill="#2a56c8" />
            <path d="M3 10h8l3-4v2l-3 4H3z" fill="#444" />
          </>
        ) : (
          <>
            <path d="M4 3.500h8M8 4v7M4 11.500h7" stroke="#5a6478" strokeWidth="1.600" />
            <path d="M9 5l4-1v7l-4 1z" fill="#b4bac6" />
            <text x="8" y="14" textAnchor="middle" fontSize="7" fontWeight="700" fontFamily="Liberation Sans" fill="#111">
              {tag}
            </text>
          </>
        )}
      </svg>
    );
  }
  switch (name) {
    case 'root':
      return (
        <svg viewBox="0 0 16 16" className="size-4">
          <path d="M5 1.500h8l2 2v12H5z" fill="#eceef2" stroke="#6a7080" />
          <path d="M10 6h4M10 8.500h4M7 11h7M7 13h7" stroke="#6a7080" />
          <path d="M1 6l4-3 5 2v4l-3 3-3-4-3-1z" fill="#6585b4" stroke="#3d5688" strokeWidth=".7" />
        </svg>
      );
    case 'opened':
      return (
        <svg viewBox="0 0 16 16" className="size-4">
          <path d="M2 3h5l1 1.500h7V14H4z" fill="#8f7718" stroke="#6d5a14" strokeWidth=".7" />
          <path d="M0 6h12l3 8H4z" fill="#d9bb34" stroke="#7d6818" strokeWidth=".7" />
        </svg>
      );
    case 'load':
      return (
        <svg viewBox="0 0 16 16" className="size-4">
          <path d="M0 14.500h15" stroke="#777" strokeWidth="1.500" />
          <path d="M11 5h2v5h2l-3 4-3-4h2z" fill="#4a66b4" />
        </svg>
      );
    case 'comboG':
    case 'comboB':
      return (
        <svg viewBox="0 0 16 16" className="size-4">
          <path d="M.5 1.500h5v3h-5zM.5 11.500h5v3h-5z" fill="#fff" stroke="#333" />
          <path d="M7 3h3l3 3M7 13h3l3-3" fill="none" stroke="#333" strokeWidth="1.200" />
          <path d="M10.500 6.500h5v3h-5z" fill={name === 'comboG' ? '#1fae49' : '#5b95ea'} stroke="#24507c" strokeWidth=".8" />
        </svg>
      );
    default:
      return (
        <svg viewBox="0 0 16 16" className="size-4">
          <path d="M1.500 3.500h5l1 1.500h7v9h-13z" fill="#f0d44a" stroke="#96812a" />
          <path d="M2.500 6h11" stroke="#fbf0a8" />
          <path d="M2 14.500h13v-9" stroke="#6f6120" fill="none" />
          {folderMarks[name]}
        </svg>
      );
  }
}

const tree: TreeRow[] = [
  { level: 0, label: 'ModeloRFEM*', icon: 'root', exp: '-' },
  { level: 1, label: 'Datos del modelo', icon: 'opened', exp: '-' },
  { level: 2, label: 'Nudos', icon: 'dot', exp: '+' },
  { level: 2, label: 'Líneas', icon: 'line', exp: '+' },
  { level: 2, label: 'Materiales', icon: 'material', exp: '+' },
  { level: 2, label: 'Superficies', icon: 'surface', exp: '+' },
  { level: 2, label: 'Sólidos', icon: 'solid', exp: '+' },
  { level: 2, label: 'Huecos', icon: 'hole' },
  { level: 2, label: 'Apoyos en nudos', icon: 'support' },
  { level: 2, label: 'Apoyos en línea', icon: 'lineSup' },
  { level: 2, label: 'Apoyos en superficie', icon: 'surfSup' },
  { level: 2, label: 'Articulaciones lineales', icon: 'hinge' },
  { level: 2, label: 'Espesores variables', icon: 'thick' },
  { level: 2, label: 'Superficies ortótropas y membranas', icon: 'ortho' },
  { level: 2, label: 'Secciones', icon: 'section' },
  { level: 2, label: 'Articulaciones en barras', icon: 'hingeBar' },
  { level: 2, label: 'Excentricidades de barra', icon: 'bar' },
  { level: 2, label: 'Divisiones de barra', icon: 'divBar' },
  { level: 2, label: 'Barras', icon: 'bar' },
  { level: 2, label: 'Nervios', icon: 'rib' },
  { level: 2, label: 'Apoyos elásticos en barra', icon: 'elastic' },
  { level: 2, label: 'No linealidades de barra', icon: 'nonlin' },
  { level: 2, label: 'Conjuntos de barras', icon: 'divBar' },
  { level: 2, label: 'Intersecciones de superficies', icon: 'solid', exp: '+' },
  { level: 2, label: 'Refinamientos de malla de EF', icon: 'refine' },
  { level: 2, label: 'Liberaciones de nudos', icon: 'folder' },
  { level: 2, label: 'Tipos de liberaciones de líneas', icon: 'folder' },
  { level: 2, label: 'Liberaciones de líneas', icon: 'hinge' },
  { level: 2, label: 'Tipos de liberaciones de superficies', icon: 'release' },
  { level: 2, label: 'Liberaciones de superficies', icon: 'release' },
  { level: 2, label: 'Unión de dos barras', icon: 'folder' },
  { level: 2, label: 'Uniones', icon: 'folder' },
  { level: 2, label: 'Coacciones en nudo', icon: 'cross', last: true },
  { level: 1, label: 'Casos de carga y combinaciones', icon: 'opened', exp: '-' },
  { level: 2, label: 'Casos de carga', icon: 'load' },
  { level: 2, label: 'Combinaciones de carga', icon: 'comboG' },
  { level: 2, label: 'Combinaciones de resultados', icon: 'comboB', last: true },
  { level: 1, label: 'Cargas', icon: 'folder' },
  { level: 1, label: 'Resultados', icon: 'folder' },
  { level: 1, label: 'Secciones', icon: 'folder' },
  { level: 1, label: 'Regiones medias', icon: 'folder' },
  { level: 1, label: 'Informes', icon: 'folder' },
  { level: 1, label: 'Objetos auxiliares', icon: 'folder', exp: '+' },
  { level: 1, label: 'Módulos adicionales', icon: 'opened', exp: '-' },
  { level: 2, label: 'RF-STEEL Surfaces - Análisis general de t', icon: 'rf:surf' },
  { level: 2, label: 'RF-STEEL Members - Análisis general de', icon: 'rf:' },
  { level: 2, label: 'RF-STEEL EC3 - Cálculo de barras de ace', icon: 'rf:EC' },
  { level: 2, label: 'RF-STEEL AISC - Diseño de barras de ace', icon: 'rf:AISC' },
  { level: 2, label: 'RF-STEEL IS - Cálculo de barras de acero', icon: 'rf:IS' },
  { level: 2, label: 'RF-STEEL SIA - Cálculo de barras de acer', icon: 'rf:SIA' },
  { level: 2, label: 'RF-STEEL BS - Cálculo de barras de acero', icon: 'rf:BS' },
  { level: 2, label: 'RF-STEEL GB - Cálculo de barras de acero', icon: 'rf:GB' },
  { level: 2, label: 'RF-STEEL CSA - Cálculo de barras de ace', icon: 'rf:CSA' },
  { level: 2, label: 'RF-STEEL AS - Cálculo de barras de acero', icon: 'rf:AS' },
];

function Joint({ row }: { row: TreeRow }) {
  const lines = (
    <svg viewBox="0 0 19 18" className="h-[18px] w-[19px] shrink-0">
      <g stroke="#777" strokeDasharray="1 1" fill="none">
        <path d={row.level === 0 ? 'M9.500 0v9' : row.last ? 'M9.500 0v10' : 'M9.500 0v18'} />
        <path d="M10 10.500h9" />
      </g>
      {row.exp && (
        <>
          <rect x="5.500" y="6.500" width="8" height="8" rx="1" fill="#f6f6f6" stroke="#8f8f8f" />
          <path d={row.exp === '+' ? 'M7 10.500h5M9.500 8v5' : 'M7 10.500h5'} stroke="#2b3f8c" />
        </>
      )}
    </svg>
  );
  if (!row.exp) return lines;
  return (
    <button aria-label={row.exp === '+' ? 'Expandir' : 'Contraer'} className="shrink-0">
      {lines}
    </button>
  );
}

function Chevron({ d }: { d: string }) {
  return (
    <svg viewBox="0 0 10 10" className="size-2.5">
      <path d={d} fill="none" stroke="#4a4a4a" strokeWidth="2" />
    </svg>
  );
}

function Navigator() {
  return (
    <aside className="flex w-[318px] shrink-0 flex-col bg-[#cfd4dd]">
      <div className="flex h-5 items-center justify-between bg-[#b9bfca] pr-0.5 pl-1">
        <h2 className="text-[11px] text-[#3f434b]">Navegador de proyectos - Datos</h2>
        <div className="flex">
          <button aria-label="Fijar" className="flex size-4 items-center justify-center">
            <svg viewBox="0 0 10 10" className="size-2.5" fill="none" stroke="#5a5e66">
              <path d="M3.500 6V1.500h3V6M1.500 6.500h7M5 7v3M7.500 1v5" />
            </svg>
          </button>
          <button aria-label="Cerrar panel" className="flex size-4 items-center justify-center">
            <svg viewBox="0 0 10 10" className="size-2.5">
              <path d="M1 1l8 8M9 1L1 9" stroke="#5a5e66" />
            </svg>
          </button>
        </div>
      </div>
      <div className="flex min-h-0 flex-1 flex-col border-2 border-[#e6e9f0] border-b-[#8d929c]">
        <div className="flex min-h-0 flex-1 flex-col border border-[#8d929c] bg-[#f0f0f0] pb-0.5">
          <div className="flex min-h-0 flex-1 pr-px">
            <ul className="min-w-0 flex-1 overflow-hidden bg-[#fcfbf3] pl-[3px] text-[11px] text-black">
              {tree.map((row, i) => (
                <li key={i} className="flex h-[18px] items-center whitespace-nowrap">
                  {row.level > 0 && <span className="w-[19px] shrink-0" />}
                  {row.level > 1 && (
                    <svg viewBox="0 0 19 18" className="h-[18px] w-[19px] shrink-0">
                      <path d="M9.500 0v18" stroke="#777" strokeDasharray="1 1" />
                    </svg>
                  )}
                  <Joint row={row} />
                  <span className="flex w-5 shrink-0 justify-center">
                    <TreeIcon name={row.icon} />
                  </span>
                  <span className={clsx('pl-0.5', row.level === 0 && 'font-bold')}>{row.label}</span>
                </li>
              ))}
            </ul>
            <div className="flex w-4 flex-col items-center">
              <button aria-label="Subir" className="flex h-4 items-center justify-center">
                <Chevron d="M1 7l4-4 4 4" />
              </button>
              <div className="flex w-full flex-1 flex-col pt-[18px]">
                <div className="h-[47%] bg-[#cdcdcd]" />
              </div>
              <button aria-label="Bajar" className="flex h-4 items-center justify-center">
                <Chevron d="M1 3l4 4 4-4" />
              </button>
            </div>
          </div>
          <div className="flex h-4 items-center pr-[18px]">
            <button aria-label="Izquierda" className="flex w-[17px] justify-center">
              <Chevron d="M7 1L3 5l4 4" />
            </button>
            <div className="h-4 flex-1">
              <div className="h-4 w-[45%] bg-[#cdcdcd]" />
            </div>
            <button aria-label="Derecha" className="flex w-[17px] justify-center">
              <Chevron d="M3 1l4 4-4 4" />
            </button>
          </div>
        </div>
      </div>
      <div role="tablist" className="flex h-[23px] items-start pl-[3px] text-[11px] text-[#4a4e57]">
        <button
          role="tab"
          aria-selected
          className="flex h-5 w-[54px] items-center gap-0.5 rounded-b-sm border border-t-0 border-[#d5f0f2] bg-[#e9ecf3]"
        >
          <svg viewBox="0 0 18 16" className="h-4 w-[18px] shrink-0">
            <path d="M4 1h12v11H4z" fill="#fff" stroke="#4d78cf" />
            <path d="M4 1h12v3H4z" fill="#4d78cf" />
            <path d="M1 5h7v9H1z" fill="#f2c928" stroke="#8f7410" strokeWidth=".8" />
            <circle cx="10" cy="9" r="3.500" fill="#cfe3fa" stroke="#33507f" strokeWidth="1.300" />
            <path d="M12.500 12l3 3.500" stroke="#a8572a" strokeWidth="2" />
          </svg>
          Datos
        </button>
        <button role="tab" className="flex h-5 w-[72px] items-center gap-0.5 pl-2">
          <svg viewBox="0 0 16 16" className="size-4 shrink-0">
            <path d="M1.500 3.500h11v12h-11z" fill="#e4eeff" stroke="#3d68b8" />
            <path d="M3 8h8M3 10.500h8M3 13h8" stroke="#2e5bb4" strokeWidth="1.300" />
            <path d="M3 4l4-3h7l1 2-5 3z" fill="#c49a78" stroke="#5f4028" strokeWidth=".8" />
          </svg>
          Mostrar
        </button>
        <button role="tab" className="flex h-5 items-center gap-0.5 pl-1.5">
          <svg viewBox="0 0 14 16" className="h-4 w-3.5 shrink-0">
            <path d="M10 1l3 2-7 8-3-2zM1 14.500h12M10 7l2 7H4" fill="#6f95e0" stroke="#2b50ae" strokeWidth="1.300" />
          </svg>
          Vistas
        </button>
      </div>
    </aside>
  );
}

// ---------- model views ----------

/** Vertices of a regular polygon squeezed into an ellipse, one every 11.25 degrees. */
function ring(cx: number, cy: number, rx: number, ry: number, offset = 0) {
  return Array.from({ length: 32 }, (_, i) => {
    const a = ((offset + i * 11.25) * Math.PI) / 180;
    return `${(cx + rx * Math.cos(a)).toFixed(1)},${(cy - ry * Math.sin(a)).toFixed(1)}`;
  }).join(' ');
}

function Arrow({ from, to, color, dark, label, at }: {
  from: [number, number];
  to: [number, number];
  color: string;
  dark: string;
  label: string;
  at: [number, number];
}) {
  const [x1, y1] = from;
  const [x2, y2] = to;
  const len = Math.hypot(x2 - x1, y2 - y1);
  const ux = (x2 - x1) / len;
  const uy = (y2 - y1) / len;
  const bx = x2 - ux * 9;
  const by = y2 - uy * 9;
  return (
    <g>
      <path d={`M${x1} ${y1}L${bx} ${by}`} stroke={color} strokeWidth="2" />
      <path d={`M${x2} ${y2}L${bx - uy * 3} ${by + ux * 3}L${bx + uy * 3} ${by - ux * 3}Z`} fill={dark} />
      <text x={at[0]} y={at[1] + 4} textAnchor="middle" fontSize="11" fontFamily="Liberation Mono, monospace" fill={color}>
        {label}
      </text>
    </g>
  );
}

const Dot = ({ x, y, c = '#8b0000', r = 2 }: { x: number; y: number; c?: string; r?: number }) => (
  <rect x={x - r} y={y - r} width={r * 2} height={r * 2} rx="1" fill={c} />
);

const OLIVE = '#808000';

function AxesTop({ x, y }: { x: number; y: number }) {
  return (
    <>
      <Arrow from={[x, y]} to={[x + 40, y]} color="#ff0000" dark="#c00000" label="X" at={[x + 51, y]} />
      <Arrow from={[x, y]} to={[x, y + 41]} color="#00f000" dark="#00a800" label="Y" at={[x, y + 51]} />
      <rect x={x - 2.5} y={y - 3} width="5" height="6" fill="#0000ff" />
    </>
  );
}

function AxesFront({ x, y }: { x: number; y: number }) {
  return (
    <>
      <Arrow from={[x, y]} to={[x, y - 41]} color="#0000ff" dark="#0000b0" label="Z" at={[x, y - 50]} />
      <Arrow from={[x, y]} to={[x + 40, y]} color="#ff0000" dark="#c00000" label="X" at={[x + 50, y]} />
      <circle cx={x} cy={y} r="2.500" fill="#00ff00" />
    </>
  );
}

function AxesIso({ x, y }: { x: number; y: number }) {
  return (
    <>
      <Arrow from={[x, y]} to={[x, y - 39]} color="#0000ff" dark="#0000c0" label="Z" at={[x, y - 48]} />
      <Arrow from={[x, y]} to={[x + 21, y - 10]} color="#00ff00" dark="#00a800" label="Y" at={[x + 26, y - 10]} />
      <Arrow from={[x, y]} to={[x + 35, y + 5]} color="#ff0000" dark="#c00000" label="X" at={[x + 43, y + 7]} />
    </>
  );
}

function TopView() {
  return (
    <svg viewBox="333 131 617 552" className="h-full w-full">
      <path d="M636.500 131v32" stroke="#b8b8b8" />
      <polygon points={ring(655.5, 415, 253.5, 253.5)} fill="#8c8cff" stroke="#555" />
      <polygon points={ring(655.5, 415, 253.5, 253.5)} fill="none" stroke="#000" strokeDasharray="9 3" />
      <polygon points={ring(655.5, 415, 231, 231)} fill="none" stroke="#a0a0b0" strokeDasharray="14 6" />
      <path d="M636 162h39v46l-19.500 13L636 208z" fill="#7f7ffc" />
      <path d="M655.500 162v59" stroke="#8989ff" strokeWidth="3" />
      <path d="M636.500 163v45l19 13" fill="none" stroke="#6c6cc0" strokeDasharray="3 3" />
      <path d="M636 207.500h39M675 163v45" fill="none" stroke="#7676e6" />
      <Dot x={636} y={161} c={OLIVE} />
      <Dot x={655.5} y={161} c={OLIVE} />
      <Dot x={675} y={161} c={OLIVE} />
      <Dot x={636} y={208} c="#8a5cc8" />
      <Dot x={675} y={208} c="#7a78b0" />
      <Dot x={655.5} y={221} c="#8a4fb8" />
      <Dot x={402} y={415} />
      <Dot x={909} y={415} c={OLIVE} />
      <Dot x={655.5} y={545.5} c="#8a5cd8" r={2.5} />
      <AxesTop x={656} y={415} />
      <AxesTop x={389} y={587} />
    </svg>
  );
}

function FrontView() {
  return (
    <svg viewBox="333 726 617 404" className="h-full w-full">
      <defs>
        <linearGradient id="band">
          <stop offset="0" stopColor="#8a8aff" />
          <stop offset=".06" stopColor="#9090ff" />
          <stop offset=".14" stopColor="#8b8bf0" />
          <stop offset=".24" stopColor="#9a9aff" />
          <stop offset=".42" stopColor="#aaaaff" />
          <stop offset=".54" stopColor="#babaff" />
          <stop offset=".62" stopColor="#a9a9ff" />
          <stop offset=".76" stopColor="#a6a6ff" />
          <stop offset=".88" stopColor="#9797f6" />
          <stop offset="1" stopColor="#9090ff" />
        </linearGradient>
      </defs>
      <rect x="378" y="907" width="554" height="56" fill="url(#band)" />
      <path d="M378.500 907v56M378 906.500h554" stroke="#3a3a5c" strokeWidth="1.500" />
      <path d="M378 963.500h554" stroke="#333350" strokeWidth="1.300" strokeDasharray="12 3" />
      <path d="M931 909.500H391.500v51H931" fill="none" stroke="#9494b0" strokeDasharray="6 2 2 2" />
      <ellipse cx="655" cy="935" rx="21" ry="21" fill="#acacff" fillOpacity=".5" stroke="#9a9aae" strokeWidth="1.500" />
      <ellipse cx="655" cy="935" rx="21" ry="21" fill="none" stroke="#111" strokeDasharray="1.500 4" strokeWidth="1.500" />
      <path d="M638 929l13 5M637 941l10-4M640 943l8 7M666 943l-8 11" stroke="#a4a4b8" strokeDasharray="8 2" />
      <path d="M634 935h20" stroke="#4d4d80" strokeWidth="2" />
      <Dot x={634} y={935} c={OLIVE} />
      <Dot x={676} y={935} c={OLIVE} />
      <Dot x={655} y={914} c={OLIVE} />
      <Dot x={655} y={935} c="#702040" />
      <Dot x={378} y={907} />
      <Dot x={655} y={907} />
      <Dot x={932} y={907} />
      <Dot x={378} y={963} />
      <Dot x={932} y={963} c={OLIVE} />
      <AxesFront x={655} y={963} />
      <AxesFront x={390} y={1048} />
    </svg>
  );
}

function IsoView() {
  const rim = ring(1436, 600, 307, 79.5, 3.55);
  const floor = ring(1436, 661, 307, 79, 3.55);
  return (
    <svg viewBox="969 134 935 994" className="h-full w-full">
      <defs>
        <linearGradient id="wall">
          <stop offset="0" stopColor="#8080e6" />
          <stop offset=".2" stopColor="#8585f0" />
          <stop offset=".52" stopColor="#9d9dea" />
          <stop offset=".75" stopColor="#8e8eea" />
          <stop offset="1" stopColor="#8080ec" />
        </linearGradient>
        <linearGradient id="back">
          <stop offset="0" stopColor="#7e7ede" />
          <stop offset=".2" stopColor="#7979cc" />
          <stop offset=".5" stopColor="#8888d6" />
          <stop offset=".8" stopColor="#7c7cd4" />
          <stop offset="1" stopColor="#7575d2" />
        </linearGradient>
        <clipPath id="rimClip">
          <polygon points={rim} />
        </clipPath>
      </defs>
      <polygon points={floor} fill="url(#wall)" />
      <path d="M1129 604h614v60h-614z" fill="url(#wall)" />
      <polygon points={rim} fill="url(#back)" />
      <polygon points={floor} fill="#7373c6" clipPath="url(#rimClip)" />

      <polygon points={ring(1436, 600, 279, 72)} fill="none" stroke="#a8a8b8" strokeDasharray="9 4" />
      <polygon points={ring(1436, 661, 279, 72)} fill="none" stroke="#7a7ab8" strokeDasharray="8 4" strokeOpacity=".6" />
      <polygon points={ring(1436, 603, 304, 79, 3.55)} fill="none" stroke="#7b7ba8" strokeDasharray="8 3 2 3" strokeOpacity=".8" />
      <polygon points={ring(1436, 658, 304, 79, 3.55)} fill="none" stroke="#8080b0" strokeDasharray="8 3 2 3" strokeOpacity=".8" />
      <polygon points={floor} fill="none" stroke="#26265a" strokeDasharray="9 3" />
      <polygon points={rim} fill="none" stroke="#0a0a20" />
      <path d="M1170 560v61" stroke="#2a2a60" />
      <path d="M1230.500 543v56" stroke="#7070a0" strokeDasharray="7 3 2 3" />

      {/* nozzle */}
      <path d="M1280 675l31-12c12 2 21 13 21 27-1 9-4 15-9 17l-34 15z" fill="#7777fa" fillOpacity=".85" />
      <ellipse cx="1283" cy="699" rx="20" ry="23" fill="#9090e8" stroke="#a8a8b8" />
      <path d="M1291 683c5 6 9 14 11 20-2 8-5 14-11 18z" fill="#a9a9f4" />
      <ellipse cx="1283" cy="699" rx="20" ry="23" fill="none" stroke="#111" strokeDasharray="1.500 4" />
      <path d="M1262 696l29-13" stroke="#111" strokeWidth="1.500" />
      <path d="M1262 696l-42 18M1291 683h28" stroke="#6b6bb8" />
      <Dot x={1239} y={696} c="#6e6ec0" />
      <Dot x={1239} y={719} c="#6e6ec0" />
      <Dot x={1319} y={683} c="#6a3fa8" />
      <Dot x={1311} y={663} c="#66666a" />
      <Dot x={1332} y={690} c="#66669a" />
      <Dot x={1262} y={696} c={OLIVE} />
      <Dot x={1303} y={702} c={OLIVE} />
      <Dot x={1282} y={677} c={OLIVE} />
      <Dot x={1291} y={683} />

      <Dot x={1170} y={560} />
      <Dot x={1170} y={621} c="#6a2050" />
      <Dot x={1282} y={669} />
      <Dot x={1702} y={640} />
      <Dot x={1702} y={701} c={OLIVE} />
      <Dot x={1282} y={730} c={OLIVE} />
      <Dot x={1515} y={595} c="#6a1fa0" r={2.5} />
      <path d="M1433 600h6" stroke="#a8a8b8" strokeWidth="1.500" />
      <AxesIso x={1436} y={661} />
      <AxesIso x={1024} y={987} />
    </svg>
  );
}

const frameButton =
  'flex h-[18px] w-8 items-center justify-center rounded-xs border border-[#5c7391] bg-linear-to-b from-[#c3d6eb] from-50% to-[#9db6d2] to-50% shadow-[inset_0_0_0_1px_#dbe8f5]';

function ViewWindow({ children, barHeight, bottom = 'pb-[7px]' }: {
  children: ReactNode;
  barHeight: string;
  bottom?: string;
}) {
  return (
    <section
      className={clsx(
        'flex min-h-0 min-w-0 flex-col rounded-t-md border border-t-[#222] border-r-[#35c3dd] border-b-[#35c3dd] border-l-[#f4f8fc] bg-[linear-gradient(to_bottom,#99b4d1_0,#b9d1ea_30px,#e1ecf8_118px,#b9d1ea_118px)] px-[7px] inset-shadow-[0_1px_0_#fff]',
        bottom
      )}
    >
      <div className={clsx('flex shrink-0 items-center justify-between pt-1 pr-px pl-px', barHeight)}>
        <div className="flex items-center gap-1">
          <svg viewBox="0 0 16 12" className="h-3 w-4">
            <path d="M0 0h16v12H0z" fill="#1f2466" />
            <path d="M0 8.500h16M7.500 2v10M8 2l7 6M7 2L1 8M5 4v4M10.500 4v4" stroke="#fff" strokeWidth="1.200" />
          </svg>
          <h3 className="text-[11px] text-black">ModeloRFEM*</h3>
        </div>
        <div className="flex gap-0.5">
          <button aria-label="Minimizar ventana" className={frameButton}>
            <svg viewBox="0 0 12 10" className="h-2.5 w-3">
              <rect x="1" y="4.500" width="10" height="4" rx="1" fill="#fff" stroke="#4d5a6c" />
            </svg>
          </button>
          <button aria-label="Maximizar ventana" className={frameButton}>
            <svg viewBox="0 0 12 10" className="h-2.5 w-3">
              <rect x="1" y=".5" width="10" height="9" rx="1" fill="#fff" stroke="#4d5a6c" />
              <rect x="4" y="3.500" width="4" height="3" fill="#9db6d2" stroke="#4d5a6c" />
            </svg>
          </button>
          <button
            aria-label="Cerrar ventana"
            className="flex h-[18px] w-8 items-center justify-center rounded-xs border border-[#4a1420] bg-linear-to-b from-[#e2a094] from-50% to-[#bb402c] to-50% shadow-[inset_0_0_0_1px_#e9b3a8]"
          >
            <svg viewBox="0 0 12 10" className="h-2.5 w-3">
              <path d="M2.500 1.500l7 7M9.500 1.500l-7 7" stroke="#4d5a6c" strokeWidth="4" />
              <path d="M2.500 1.500l7 7M9.500 1.500l-7 7" stroke="#fff" strokeWidth="2.200" />
            </svg>
          </button>
        </div>
      </div>
      <div className="min-h-0 flex-1 border border-t-[#6b6b6b] border-r-white border-b-white border-l-[#6b6b6b] bg-white">
        {children}
      </div>
    </section>
  );
}

// ---------- status bar ----------

const modes = [
  { label: 'FORZC', width: 'w-[43px]' },
  { label: 'REJILLA', width: 'w-[46px]' },
  { label: 'CARTES', width: 'w-[49px]' },
  { label: 'REFENT', width: 'w-[47px]', off: true },
  { label: 'GLN', width: 'w-[28px]' },
  { label: 'DXF', width: 'w-[28px]' },
];

function StatusBar() {
  return (
    <footer className="flex h-[21px] items-center bg-linear-to-b from-[#dcdfe8] via-[#aeb3be] to-[#bbc0cb] font-['Liberation_Sans',sans-serif] text-[11px] text-[#1c1e22]">
      <p className="flex-1 pl-1">Define gráficamente un comentario nuevo.</p>
      <div className="flex gap-0.5">
        {modes.map((m) => (
          <button
            key={m.label}
            aria-pressed={!m.off}
            className={clsx(
              'h-[18px] border text-left',
              m.width,
              m.off
                ? 'border-t-white border-r-[#8d929c] border-b-[#8d929c] border-l-white bg-[#c3c7d0] pl-px leading-3'
                : 'border-t-black border-r-white border-b-white border-l-black pl-px leading-4'
            )}
          >
            {m.label}
          </button>
        ))}
      </div>
      <div className="grid h-[17px] w-[499px] grid-cols-[190px_89px_74px_73px_1fr] divide-x divide-[#9298a4]">
        <span />
        <span />
        <span />
        <span />
        <span />
      </div>
    </footer>
  );
}

export default function App() {
  return (
    <div className="flex h-screen flex-col overflow-hidden bg-[#cfd4dd] font-['Open_Sans','Noto_Sans',sans-serif]">
      <TitleBar />
      <MenuBar />
      <Toolbars />
      <main className="flex min-h-0 flex-1">
        <Navigator />
        <div className="flex min-w-0 flex-1 border-l-4 border-[#cfd4dd] bg-[#b9bfca] pr-[7px]">
          <div className="grid min-w-0 flex-1 grid-cols-[636fr_953fr] border-t border-l-2 border-[#6d6f72] bg-[#1a1c1e]">
            <div className="grid min-h-0 min-w-0 grid-rows-[593fr_445fr] gap-px pr-px">
              <ViewWindow barHeight="h-[29px]" bottom="pb-2">
                <TopView />
              </ViewWindow>
              <ViewWindow barHeight="h-[30px]">
                <FrontView />
              </ViewWindow>
            </div>
            <div className="grid min-h-0 min-w-0 border-b-2 border-[#cfd4dd]">
              <ViewWindow barHeight="h-8">
                <IsoView />
              </ViewWindow>
            </div>
          </div>
        </div>
      </main>
      <StatusBar />
    </div>
  );
}
